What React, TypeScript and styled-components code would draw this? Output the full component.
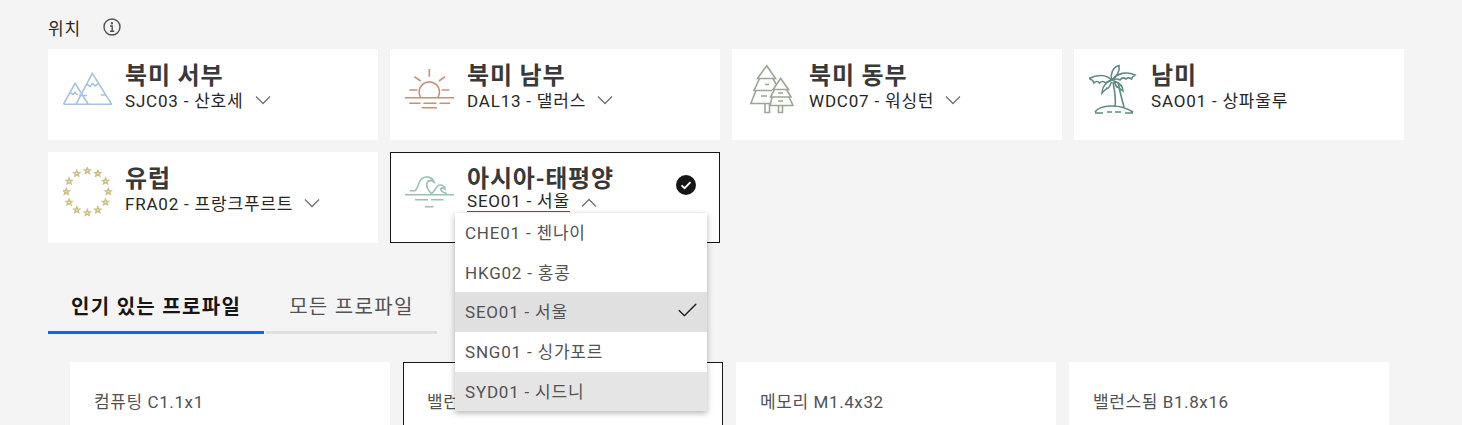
import React from "react";
import styled, { createGlobalStyle } from "styled-components";
import { Check } from "lucide-react";

const GlobalStyle = createGlobalStyle`
  html, body {
    margin: 0;
    height: 425px;
    overflow: hidden;
    background: #f4f4f4;
  }
  body {
    font-family: "Roboto", "Noto Sans CJK KR", sans-serif;
    letter-spacing: 0.8px;
    color: #161616;
  }
`;

const Page = styled.main`
  padding: 16px 58px 0 48px;
`;

const LabelRow = styled.div`
  display: flex;
  align-items: center;
  gap: 22px;
  height: 22px;
  margin-bottom: 11px;
  font-size: 17px;
  color: #262626;
`;

const RegionGrid = styled.div`
  display: grid;
  grid-template-columns: repeat(4, 330px);
  grid-auto-rows: 91px;
  gap: 12px;
`;

const RegionCard = styled.div<{ $selected?: boolean }>`
  position: relative;
  display: flex;
  align-items: flex-start;
  gap: 12px;
  padding: ${(p) => (p.$selected ? "14px 14px" : "15px 15px")};
  background: #fff;
  border: ${(p) => (p.$selected ? "1px solid #161616" : "none")};
  box-sizing: border-box;
`;

const RegionIcon = styled.svg`
  flex: none;
  width: 50px;
  height: 50px;
  fill: none;
  stroke-width: 1.6;
`;

const RegionText = styled.div`
  display: flex;
  flex-direction: column;
`;

const RegionName = styled.div`
  height: 24px;
  margin-bottom: -1px;
  padding-top: 2px;
  font-size: 24px;
  line-height: 20px;
  font-weight: 600;
  color: #393939;
`;

const CityRow = styled.div`
  display: flex;
  align-items: center;
  gap: 12px;
  height: 24px;
  color: #6f6f6f;
`;

const CityName = styled.span<{ $active?: boolean }>`
  font-size: 17px;
  line-height: ${(p) => (p.$active ? "19px" : "20px")};
  margin-bottom: ${(p) => (p.$active ? "5px" : "0")};
  color: #262626;
  border-bottom: 1px solid ${(p) => (p.$active ? "#0f62fe" : "transparent")};
`;

const Chevron = styled.svg`
  flex: none;
  width: 16px;
  height: 10px;
  margin: 0 0 3px -1px;
  fill: none;
  stroke: #6f6f6f;
  stroke-width: 1.3;
`;

const SelectedBadge = styled.svg`
  position: absolute;
  top: 22px;
  right: 23px;
  width: 20px;
  height: 20px;
`;

const Dropdown = styled.ul`
  position: absolute;
  top: 60px;
  left: 64px;
  z-index: 2;
  width: 252px;
  margin: 0;
  padding: 0;
  list-style: none;
  background: #fff;
  box-shadow: 0 2px 6px rgba(0, 0, 0, 0.3);
`;

const DropdownItem = styled.li<{ $bg?: string }>`
  display: flex;
  align-items: center;
  justify-content: space-between;
  height: 39.7px;
  box-sizing: border-box;
  padding: 0 7px 3px 10px;
  font-size: 17px;
  color: #525252;
  background: ${(p) => p.$bg || "#fff"};
`;

const Tabs = styled.div`
  display: flex;
  gap: 2px;
  margin-top: 47px;
`;

const Tab = styled.div<{ $active?: boolean }>`
  height: 44px;
  box-sizing: border-box;
  padding: 5px 23px 0;
  font-size: 20px;
  line-height: 24px;
  letter-spacing: 1.3px;
  font-weight: ${(p) => (p.$active ? 600 : 400)};
  color: ${(p) => (p.$active ? "#161616" : "#525252")};
  border-bottom: 3px solid ${(p) => (p.$active ? "#0f62fe" : "#e0e0e0")};
`;

const ProfileGrid = styled.div`
  display: grid;
  grid-template-columns: repeat(4, 319.5px);
  gap: 13.5px;
  margin: 28px 0 0 22px;
`;

const ProfileCard = styled.div<{ $selected?: boolean }>`
  height: 80px;
  box-sizing: border-box;
  padding: ${(p) => (p.$selected ? "29px 23px" : "30px 24px")};
  font-size: 17px;
  line-height: 20px;
  letter-spacing: 0.6px;
  color: #525252;
  background: #fff;
  border: ${(p) => (p.$selected ? "1px solid #161616" : "none")};
`;

const Mountains = () => (
  <RegionIcon viewBox="0 0 50 50" stroke="#a6c2e0">
    <path d="M0.5 40.3H48.7M0.5 40.3L12 19.3L25.3 40.3M13 40.3L29.3 9.3L48.7 40.3" />
    <path d="M7 28.5L10 30.5L12 28.5L15 31M23.5 20L27 22.5L29.5 19.5L32 22L35.5 19.5M16 31.5H24M38 31H43" />
  </RegionIcon>
);

const Sunset = () => (
  <RegionIcon viewBox="0 0 50 50" stroke="#c98f73">
    <path d="M0 33.7H49M4.3 39.3H15.5M18.5 39.3H31.5M34.5 39.3H45M16.7 43.7H32" />
    <path d="M15.8 33.7A10.2 10.2 0 1 1 32.8 33.7" />
    <path d="M24.3 5V12.7M9.3 12.7L15.7 17M40 12.7L34 17M4.3 26H12.3M36.7 26H44.3" />
  </RegionIcon>
);

const Trees = () => (
  <RegionIcon viewBox="0 0 50 50" stroke="#9aa893" strokeWidth={1.8}>
    <path d="M19.7 1.7L10.5 14.5H28.5L19.7 1.7Z" />
    <path d="M12.5 14.5L7 26.5H25M26 14.5L29 20" />
    <path d="M9 26.5L3.8 39.5H24M18 20.5H22M14 32H20" />
    <path d="M18 39.5V48.5H22.5V39.5" />
    <path d="M33.7 14.5L26 25.5H41.5L33.7 14.5Z" />
    <path d="M27.5 25.5L23.5 33H44L39.5 25.5" />
    <path d="M25 33L23 41.5H46L42 33M31 29H36M31 37H36" />
    <path d="M31.5 41.5V48.5H35.5V41.5" />
  </RegionIcon>
);

const Palm = () => (
  <RegionIcon viewBox="0 0 50 50" stroke="#5f8a80" strokeWidth={1.5}>
    <path d="M22.5 16C17 10 8 10.5 0 14.5C3 15.5 4.5 17 5 19C7 17 9 17 10.5 19C12.5 17 15 17 16.5 19C18 17 20 17 22.5 16Z" />
    <path d="M22.5 16C21 10 24 3 30 1.5C31 7 28 13 22.5 16Z" />
    <path d="M23 16C28 9 38 7 46 11C44 12 43 13 42.5 15C40.5 13.5 38.5 13.5 37 15C35 13.5 32.5 14 31 16C29 14.5 26 15 23 16Z" />
    <path d="M23 16C17 18 13 23 13 29C15 26 17 26 18 24C19 25 20 24 22.5 18" />
    <path d="M25 17C31 19 34 23 34 27C32 25 30 25 29 23C28 24 27 22 25 17Z" />
    <path d="M24 18C26 28 27 36 26 43M29 18C31 28 33 36 35 43" />
    <path d="M6 48C11 41 30 39 44 48M6 49H14M18 48H23M26 48H32M36 49H44" />
  </RegionIcon>
);

// étoiles posées en cercle, comme sur le drapeau
const Stars = () => (
  <RegionIcon viewBox="0 0 50 50" stroke="#cdbf85" strokeWidth={1.6}>
    {Array.from({ length: 12 }, (_, i) => {
      const a = (i * Math.PI) / 6;
      const x = 24.3 + 21 * Math.sin(a);
      const y = 24.7 - 21 * Math.cos(a);
      return (
        <path
          key={i}
          transform={`translate(${x.toFixed(1)} ${y.toFixed(1)})`}
          d="M0-2.8L.8-.9L2.8-.8L1.3.5L1.8 2.4L0 1.4L-1.8 2.4L-1.3.5L-2.8-.8L-.8-.9Z"
        />
      );
    })}
  </RegionIcon>
);

const Waves = () => (
  <RegionIcon viewBox="0 0 50 50" stroke="#9bbfb5">
    <path d="M0 27.7H49M10 32.7H23M26 32.7H38.5M20 39.7H28.5" />
    <path d="M5 23.7H10C14 21 13 13 18 11C22 9 27 10 29 15C26 13 23 13 22 16C21 19 23 24 27 27" />
    <path d="M27 26C30 25 31 18 35 18C38 18 40 20 40 22C37 20 35 21 36 23C37 25 39 26 42 26.5" />
  </RegionIcon>
);

const regions = [
  { name: "북미 서부", city: "SJC03 - 산호세", icon: <Mountains />, chevron: true },
  { name: "북미 남부", city: "DAL13 - 댈러스", icon: <Sunset />, chevron: true },
  { name: "북미 동부", city: "WDC07 - 워싱턴", icon: <Trees />, chevron: true },
  { name: "남미", city: "SAO01 - 상파울루", icon: <Palm />, chevron: false },
  { name: "유럽", city: "FRA02 - 프랑크푸르트", icon: <Stars />, chevron: true },
];

const profiles = ["컴퓨팅 C1.1x1", "밸런스됨 B1.2x4", "메모리 M1.4x32", "밸런스됨 B1.8x16"];

export default function App() {
  return (
    <Page>
      <GlobalStyle />
      <LabelRow>
        위치
        <svg width="18" height="18" viewBox="0 0 18 18" fill="none" stroke="#525252" strokeWidth="1.4">
          <circle cx="9" cy="9" r="8" />
          <path d="M7 8H9.2V13.2M7 13.3H11.2" />
          <circle cx="8.9" cy="5.2" r="0.5" />
        </svg>
      </LabelRow>
      <RegionGrid>
        {regions.map((r) => (
          <RegionCard key={r.name}>
            {r.icon}
            <RegionText>
              <RegionName>{r.name}</RegionName>
              <CityRow>
                <CityName>{r.city}</CityName>
                {r.chevron && (
                  <Chevron viewBox="0 0 16 10">
                    <path d="M1 1.5L8 8.5L15 1.5" />
                  </Chevron>
                )}
              </CityRow>
            </RegionText>
          </RegionCard>
        ))}
        <RegionCard $selected>
          <Waves />
          <RegionText>
            <RegionName>아시아-태평양</RegionName>
            <CityRow>
              <CityName $active>SEO01 - 서울</CityName>
              <Chevron viewBox="0 0 16 10">
                <path d="M1 8.5L8 1.5L15 8.5" />
              </Chevron>
            </CityRow>
          </RegionText>
          <SelectedBadge viewBox="0 0 20 20">
            <circle cx="10" cy="10" r="10" fill="#161616" />
            <path d="M5.5 10.3L8.6 13.2L14.5 7.2" fill="none" stroke="#fff" strokeWidth="1.8" />
          </SelectedBadge>
          <Dropdown>
            <DropdownItem>CHE01 - 첸나이</DropdownItem>
            <DropdownItem>HKG02 - 홍콩</DropdownItem>
            <DropdownItem $bg="#e0e0e0">
              SEO01 - 서울
              <Check size={25} strokeWidth={1.2} color="#161616" />
            </DropdownItem>
            <DropdownItem>SNG01 - 싱가포르</DropdownItem>
            <DropdownItem $bg="#e5e5e5">SYD01 - 시드니</DropdownItem>
          </Dropdown>
        </RegionCard>
      </RegionGrid>
      <Tabs>
        <Tab $active>인기 있는 프로파일</Tab>
        <Tab>모든 프로파일</Tab>
      </Tabs>
      <ProfileGrid>
        {profiles.map((name, i) => (
          <ProfileCard key={name} $selected={i === 1}>
            {name}
          </ProfileCard>
        ))}
      </ProfileGrid>
    </Page>
  );
}
